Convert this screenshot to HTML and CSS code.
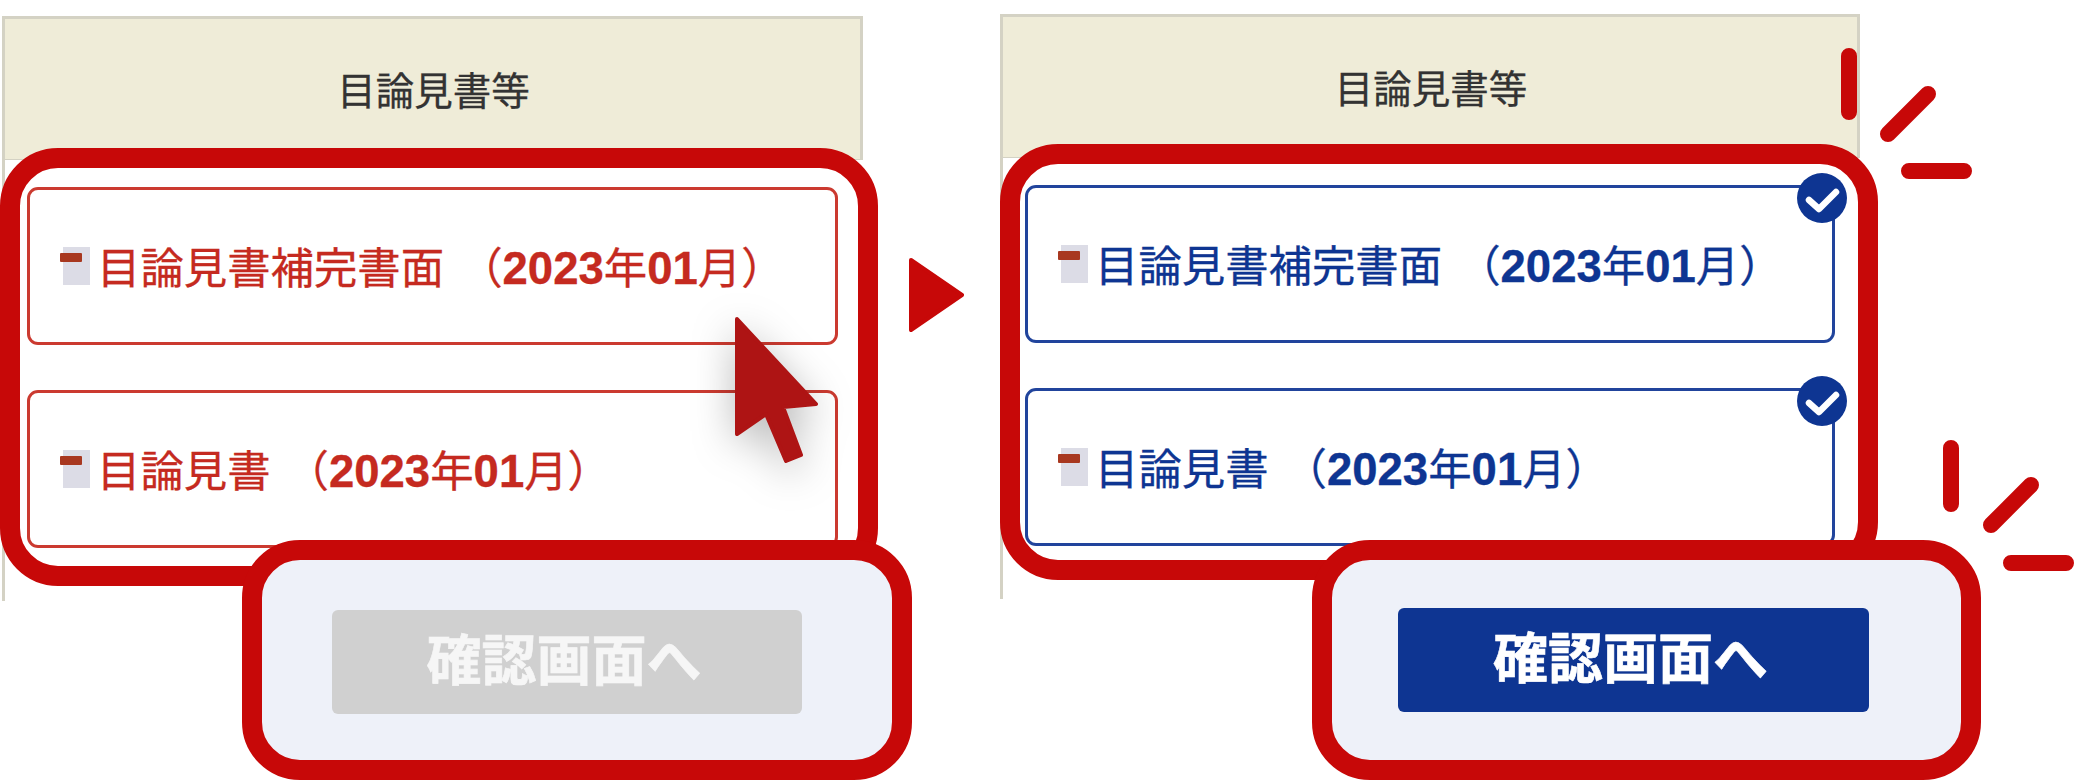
FILE: index.html
```html
<!DOCTYPE html>
<html lang="ja">
<head>
<meta charset="utf-8">
<title>目論見書等</title>
<link rel="stylesheet" href="styles.css">
</head>
<body>
<main class="page">
  <section class="panel panel-before">
    <div class="doc-table">
      <div class="doc-head">目論見書等</div>
      <div class="doc-cell">
        <a class="doc-card"><span class="doc-icon"></span><span class="doc-label">目論見書補完書面<span class="doc-date">（<b>2023</b>年<b>01</b>月）</span></span></a>
        <a class="doc-card"><span class="doc-icon"></span><span class="doc-label">目論見書<span class="doc-date">（<b>2023</b>年<b>01</b>月）</span></span></a>
      </div>
    </div>
    <div class="frame"></div>
    <div class="callout"><button class="next-btn" type="button">確認画面へ</button></div>
    <svg class="cursor" viewBox="0 0 120 180" aria-hidden="true"><path d="M17 19 96 104 63 107 81 155 66 161 46 114 17 134Z"/></svg>
    <svg class="arrow" viewBox="0 0 55 74" aria-hidden="true"><path d="M2 2 53 37 2 72Z"/></svg>
  </section>
  <section class="panel panel-after">
    <div class="doc-table">
      <div class="doc-head">目論見書等</div>
      <div class="doc-cell">
        <a class="doc-card"><span class="doc-icon"></span><span class="doc-label">目論見書補完書面<span class="doc-date">（<b>2023</b>年<b>01</b>月）</span></span>
          <svg class="check" viewBox="0 0 50 50" aria-hidden="true"><circle cx="25" cy="25" r="25"/><path d="M12 27 22 36 39 19"/></svg></a>
        <a class="doc-card"><span class="doc-icon"></span><span class="doc-label">目論見書<span class="doc-date">（<b>2023</b>年<b>01</b>月）</span></span>
          <svg class="check" viewBox="0 0 50 50" aria-hidden="true"><circle cx="25" cy="25" r="25"/><path d="M12 27 22 36 39 19"/></svg></a>
      </div>
    </div>
    <div class="frame"></div>
    <div class="callout"><button class="next-btn" type="button">確認画面へ</button></div>
    <svg class="burst burst-top" viewBox="0 0 140 140" aria-hidden="true"><path d="M8 8V64M87 46 47 86M68 123H123"/></svg>
    <svg class="burst burst-bottom" viewBox="0 0 140 140" aria-hidden="true"><path d="M8 8V64M88 45 48 85M68 123H123"/></svg>
  </section>
</main>
</body>
</html>
```

FILE: styles.css
```css
* { box-sizing: border-box; }

html, body {
  margin: 0;
  height: 780px;
  background: #fff;
  overflow: hidden;
}

body {
  font-family: "Liberation Sans", "Noto Sans CJK JP", sans-serif;
}

.page {
  display: flex;
  width: 2075px;
  height: 780px;
}

.panel {
  position: relative;
  height: 780px;
}

.panel-before { width: 1000px; padding: 16px 0 0 2px; }
.panel-after { width: 1075px; padding: 14px 0 0 0; }

.doc-table { width: 861px; }
.panel-after .doc-table { width: 860px; }

.doc-head {
  display: flex;
  align-items: center;
  justify-content: center;
  height: 144px;
  padding: 0 0 3px 2px;
  background: #efecd8;
  border: 3px solid #d4d2c4;
  border-bottom-width: 1px;
  color: #333;
  font-size: 38.5px;
  -webkit-text-stroke: 0.3px #333;
}

.doc-cell {
  display: flex;
  flex-direction: column;
  gap: 45px;
  height: 441px;
  padding: 27px 25px 0 22px;
  border-left: 3px solid #d4d2c4;
}

.doc-card {
  position: relative;
  display: flex;
  align-items: center;
  height: 158px;
  padding-left: 33px;
  border: 3px solid #cb3a30;
  border-radius: 11px;
  color: #c52a20;
  font-size: 43.4px;
  line-height: 1;
  -webkit-text-stroke: 0.3px currentColor;
}

.panel-after .doc-card {
  border-color: #21449c;
  color: #0e3592;
}

.doc-icon {
  position: relative;
  flex: none;
  width: 27px;
  height: 38px;
  margin-right: 7px;
  background: #dcdce6;
}

.doc-icon::before {
  content: "";
  position: absolute;
  left: -3px;
  top: 6px;
  width: 22px;
  height: 9px;
  border-radius: 1px;
  background: #a83820;
}

.doc-label {
  padding-top: 5px;
  white-space: pre;
}

.doc-date { margin-left: 15px; }

.doc-date b {
  font-size: 45.5px;
  font-weight: 700;
}

.check {
  position: absolute;
  top: -15px;
  right: -15px;
  width: 50px;
  height: 50px;
}

.check circle { fill: #0e3592; }

.check path {
  fill: none;
  stroke: #fff;
  stroke-width: 6.5;
  stroke-linecap: round;
  stroke-linejoin: round;
}

.frame {
  position: absolute;
  left: 0;
  top: 148px;
  width: 878px;
  height: 438px;
  border: 20px solid #c70808;
  border-radius: 58px;
}

.panel-after .frame {
  top: 144px;
  height: 436px;
}

.callout {
  position: absolute;
  left: 242px;
  top: 540px;
  width: 670px;
  height: 240px;
  padding: 50px 0 0 70px;
  background: #eef1f9;
  border: 20px solid #c70808;
  border-radius: 58px;
}

.panel-after .callout {
  left: 312px;
  width: 669px;
  padding: 48px 0 0 66px;
}

.next-btn {
  display: block;
  width: 470px;
  height: 104px;
  padding: 0 6px 11px 0;
  border: 0;
  border-radius: 6px;
  background: #d0d0d0;
  color: #f6f6f6;
  font-family: "Noto Sans CJK JP", sans-serif;
  font-size: 55px;
  font-weight: 700;
  line-height: 1;
  -webkit-text-stroke: 0.6px currentColor;
}

.panel-after .next-btn {
  width: 471px;
  background: #0e3592;
  color: #fff;
}

.cursor {
  position: absolute;
  left: 720px;
  top: 300px;
  width: 120px;
  height: 180px;
  overflow: visible;
  filter: drop-shadow(0 10px 20px rgba(0, 0, 0, 0.28));
}

.cursor path {
  fill: #ae1414;
  stroke: #ae1414;
  stroke-width: 4;
  stroke-linejoin: round;
}

.arrow {
  position: absolute;
  left: 909px;
  top: 258px;
  width: 55px;
  height: 74px;
}

.arrow path {
  fill: #c70808;
  stroke: #c70808;
  stroke-width: 4;
  stroke-linejoin: round;
}

.burst {
  position: absolute;
  width: 140px;
  height: 140px;
}

.burst-top { left: 841px; top: 48px; }
.burst-bottom { left: 943px; top: 440px; }

.burst path {
  fill: none;
  stroke: #c70808;
  stroke-width: 16;
  stroke-linecap: round;
}
```
